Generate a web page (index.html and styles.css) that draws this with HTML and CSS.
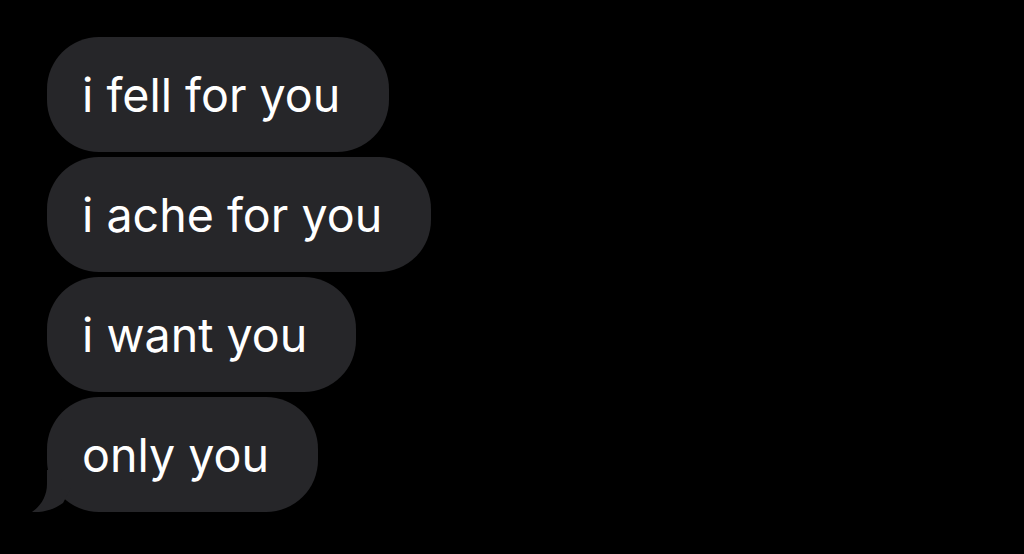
FILE: index.html
```html
<!DOCTYPE html>
<html>
<head>
<meta charset="utf-8">
<link rel="stylesheet" href="styles.css">
</head>
<body>
<div class="thread">
  <div class="bubble">i fell for you</div>
  <div class="bubble">i ache for you</div>
  <div class="bubble">i want you</div>
  <div class="bubble last">only you
    <svg class="tail" width="44" height="44" viewBox="0 0 44 44"><path d="M16 2 L16 16 C16 28 10 38 1 44 C12 45 24 41 32 35 L40 20 L20 2 Z" fill="#262629"/></svg>
  </div>
</div>
</body>
</html>
```
FILE: styles.css
```css
html, body {
  margin: 0;
  padding: 0;
  background: #000;
  width: 1024px;
  height: 554px;
  overflow: hidden;
}
.thread {
  display: flex;
  flex-direction: column;
  align-items: flex-start;
  gap: 5px;
  padding: 37px 0 0 47px;
}
.bubble {
  position: relative;
  background: #262629;
  color: #fff;
  font-family: Inter, "Liberation Sans", sans-serif;
  font-size: 46.6px;
  line-height: 55px;
  height: 55px;
  padding: 31px 49px 29px 35px;
  border-radius: 52px;
  white-space: nowrap;
  letter-spacing: 0;
}
.tail {
  position: absolute;
  left: -16px;
  bottom: 0;
  display: block;
}
```
